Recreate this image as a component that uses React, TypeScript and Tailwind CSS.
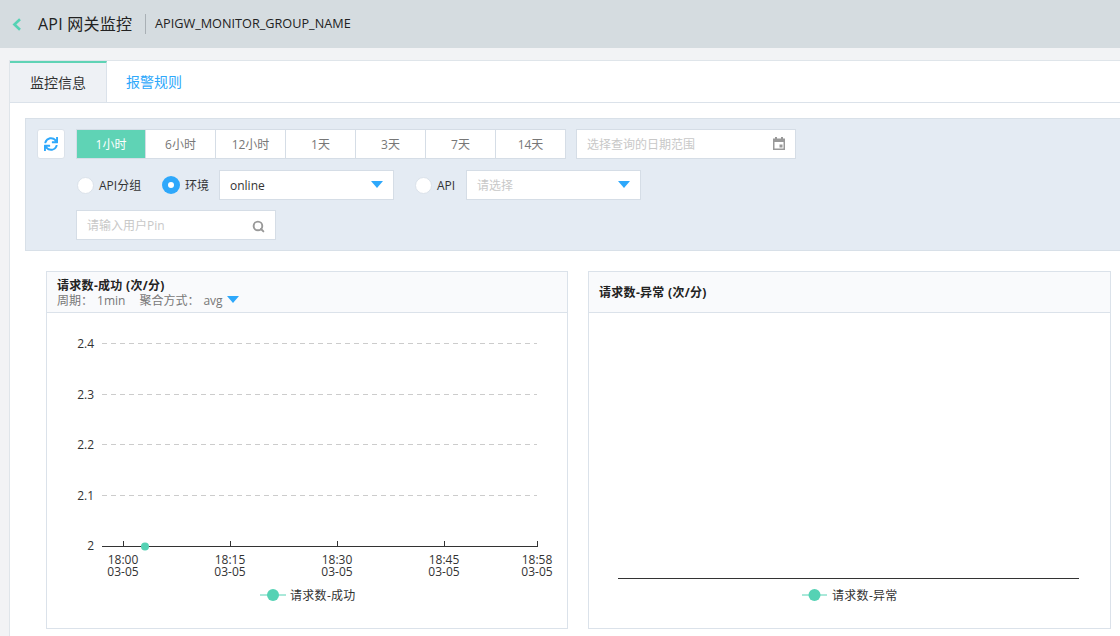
import { Search } from "lucide-react"
import { FaSync } from "react-icons/fa"

const FONT = "font-['Open_Sans','Noto_Sans_CJK_SC',sans-serif]"
const ranges = ["1小时", "6小时", "12小时", "1天", "3天", "7天", "14天"]
const gridLines = [
  { y: 30.5, label: "2.4" },
  { y: 81.5, label: "2.3" },
  { y: 131.5, label: "2.2" },
  { y: 182.5, label: "2.1" },
]
const ticks = [
  { x: 76.5, label: "18:00" },
  { x: 183.5, label: "18:15" },
  { x: 290.5, label: "18:30" },
  { x: 397.5, label: "18:45" },
  { x: 490.5, label: "18:58" },
]

function Caret({ className }: { className?: string }) {
  return (
    <svg width="12" height="7" viewBox="0 0 12 7" className={className}>
      <path d="M0 0h12L6 7z" fill="#2ea8fb" />
    </svg>
  )
}

function Radio({ checked, label, className }: { checked?: boolean; label: string; className?: string }) {
  return (
    <label className={`flex items-center gap-[5px] ${className ?? ""}`}>
      {checked ? (
        <span className="flex h-[18px] w-[18px] items-center justify-center rounded-full bg-[#2ea8fb]">
          <span className="h-[6px] w-[6px] rounded-full bg-white" />
        </span>
      ) : (
        <span className="h-[17px] w-[17px] rounded-full border border-[#dbe2ea] bg-white" />
      )}
      <span className="pt-[2px] text-[12px] text-[#333]">{label}</span>
    </label>
  )
}

function LeftChart() {
  return (
    <svg width="519" height="315" className="block">
      {gridLines.map((g) => (
        <g key={g.label}>
          <line x1="55" x2="490" y1={g.y} y2={g.y} stroke="#ccc" strokeDasharray="5 4" />
          <text x="47" y={g.y + 4.5} textAnchor="end" fontSize="12" fill="#333">
            {g.label}
          </text>
        </g>
      ))}
      <text x="47" y="237" textAnchor="end" fontSize="12" fill="#333">
        2
      </text>
      <line x1="55" x2="491" y1="233.5" y2="233.5" stroke="#333" />
      {ticks.map((t) => (
        <g key={t.label}>
          <line x1={t.x} x2={t.x} y1="228" y2="233" stroke="#333" />
          <text x={t.x - 0.5} y="251" textAnchor="middle" fontSize="12" fill="#333">
            {t.label}
          </text>
          <text x={t.x - 0.5} y="263" textAnchor="middle" fontSize="12" fill="#333">
            03-05
          </text>
        </g>
      ))}
      <circle cx="98" cy="233.5" r="4" fill="#55d2b4" />
      <line x1="213" x2="239" y1="282" y2="282" stroke="#55d2b4" />
      <circle cx="226" cy="282" r="6" fill="#55d2b4" />
      <text x="243" y="287" fontSize="12" fill="#333" className="tracking-[0.3px]">
        请求数-成功
      </text>
    </svg>
  )
}

function RightChart() {
  return (
    <svg width="520" height="315" className="block">
      <line x1="29" x2="490" y1="265.5" y2="265.5" stroke="#333" />
      <line x1="213" x2="238" y1="282" y2="282" stroke="#55d2b4" />
      <circle cx="225.5" cy="282" r="6" fill="#55d2b4" />
      <text x="243" y="287" fontSize="12" fill="#333" className="tracking-[0.3px]">
        请求数-异常
      </text>
    </svg>
  )
}

export default function App() {
  return (
    <div className={`h-[636px] w-[1120px] overflow-hidden bg-[#f2f3f5] ${FONT}`}>
      <header className="flex h-12 items-center bg-[#d5dce0] pl-[12px]">
        <svg width="10" height="13" viewBox="0 0 10 13">
          <path d="M8 1.2L2.4 6.5L8 11.8" fill="none" stroke="#55d2b4" strokeWidth="2.6" />
        </svg>
        <h1 className="ml-[16px] w-[94px] text-[16px] tracking-[0.25px] whitespace-nowrap text-[#222]">API 网关监控</h1>
        <span className="ml-[13px] h-5 w-px bg-[#a9b0b5]" />
        <span className="ml-[9px] text-[12.7px] text-[#222]">APIGW_MONITOR_GROUP_NAME</span>
      </header>

      <main className="mt-[12px] ml-[9px] h-[576px] border-t border-l border-[#dfe5ea] bg-white">
        <nav className="flex h-[42px] border-b border-[#dbe2ea]">
          <div className="flex w-[97px] items-center justify-center border-t-2 border-r border-t-[#5fd3b5] border-r-[#dbe2ea] bg-[#eef1f5] text-[14px] text-[#333]">
            监控信息
          </div>
          <div className="ml-[19px] flex items-center text-[14px] text-[#2ea8fb]">报警规则</div>
        </nav>

        <section className="mt-[15px] ml-[15px] h-[133px] border-t border-b border-l border-[#d8e0e8] bg-[#e4ebf3] pt-[10px] pl-[11px]">
          <div className="flex items-start">
            <button className="flex h-[30px] w-[28px] items-center justify-center rounded-[3px] border border-[#dbe2ea] bg-white">
              <FaSync className="h-[14px] w-[14px] text-[#2ea8fb]" />
            </button>
            <div className="ml-[11px] flex h-[30px] border border-[#d5dde6] bg-white">
              {ranges.map((r, i) => (
                <div
                  key={r}
                  className={
                    i === 0
                      ? "flex w-[68px] items-center justify-center bg-[#5fd3b5] pt-[2px] text-[12px] text-white"
                      : "flex w-[70px] items-center justify-center border-l border-[#d5dde6] pt-[2px] text-[12px] text-[#777]"
                  }
                >
                  {r}
                </div>
              ))}
            </div>
            <div className="ml-[10px] flex h-[30px] w-[220px] items-center justify-between border border-[#d5dde6] bg-white px-[10px] pt-[2px]">
              <span className="text-[12px] text-[#c8c8c8]">选择查询的日期范围</span>
              <svg width="12" height="13" viewBox="0 0 12 13" className="-mt-[3px]">
                <path
                  d="M2 0h2v1.5h4V0h2v1.5h2V13H0V1.5h2zM1.5 5v6.5h9V5zM6.5 7.5h3v3h-3z"
                  fill="#999"
                  fillRule="evenodd"
                />
              </svg>
            </div>
          </div>

          <div className="mt-[11px] ml-[40px] flex h-[30px] items-center">
            <Radio label="API分组" className="w-[85px]" />
            <Radio checked label="环境" className="w-[57px]" />
            <div className="flex h-[30px] w-[175px] items-center justify-between border border-[#d5dde6] bg-white px-[10px] pt-[2px] text-[12px] text-[#333]">
              online
              <Caret className="-mt-[4px]" />
            </div>
            <Radio label="API" className="ml-[21px] w-[51px]" />
            <div className="flex h-[30px] w-[175px] items-center justify-between border border-[#d5dde6] bg-white px-[10px] pt-[2px] text-[12px] text-[#c8c8c8]">
              请选择
              <Caret className="-mt-[4px]" />
            </div>
          </div>

          <div className="mt-[10px] ml-[39px] flex h-[30px] w-[200px] items-center justify-between border border-[#d5dde6] bg-white pt-[2px] pr-[10px] pl-[10px] text-[12px] text-[#c8c8c8]">
            请输入用户Pin
            <Search className="h-[13px] w-[13px] text-[#999]" strokeWidth={3.5} />
          </div>
        </section>

        <section className="mt-[20px] ml-[36px] flex gap-[20px]">
          <article className="h-[358px] w-[522px] border border-[#dbe2ea]">
            <div className="flex h-[41px] flex-col justify-center border-b border-[#dbe2ea] bg-[#f9fafc] pt-[2px] pl-[10px]">
              <h2 className="text-[12px] leading-[15px] font-bold tracking-[0.3px] text-[#222]">请求数-成功 (次/分)</h2>
              <p className="flex items-center text-[12px] leading-[15px] text-[#777]">
                <span>周期：</span>
                <span className="ml-[4px]">1min</span>
                <span className="ml-[14px]">聚合方式：</span>
                <span className="ml-[4px]">avg</span>
                <Caret className="ml-[4px] -mt-[2px]" />
              </p>
            </div>
            <LeftChart />
          </article>
          <article className="h-[358px] w-[523px] border border-[#dbe2ea]">
            <div className="flex h-[41px] items-center border-b border-[#dbe2ea] bg-[#f9fafc] pt-[2px] pl-[10px]">
              <h2 className="text-[12px] font-bold tracking-[0.3px] text-[#222]">请求数-异常 (次/分)</h2>
            </div>
            <RightChart />
          </article>
        </section>
      </main>
    </div>
  )
}
